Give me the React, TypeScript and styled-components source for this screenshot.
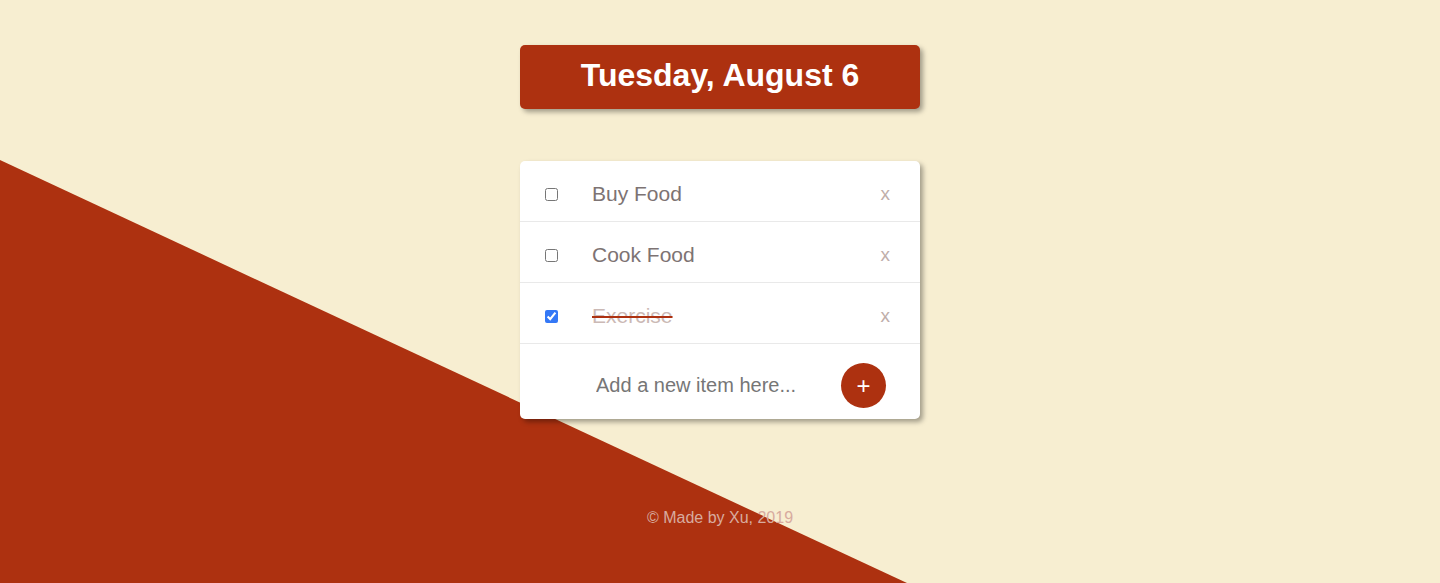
import styled, { createGlobalStyle } from "styled-components";

const GlobalStyle = createGlobalStyle`
  html, body {
    margin: 0;
    padding: 0;
    background-color: #f7eed1;
    font-family: "Liberation Sans", Helvetica, Arial, sans-serif;
  }
`;

const Page = styled.div`
  position: relative;
  min-height: 583px;
  overflow: hidden;
  display: flex;
  flex-direction: column;
  align-items: center;
  &::before {
    content: "";
    position: absolute;
    inset: 0;
    background-color: #ad3110;
    clip-path: polygon(0 160px, 907px 583px, 0 583px);
    z-index: 0;
  }
`;

const Heading = styled.div`
  position: relative;
  z-index: 1;
  width: 400px;
  height: 64px;
  margin-top: 45px;
  display: flex;
  align-items: center;
  justify-content: center;
  background-color: #ad3110;
  border-radius: 5px;
  box-shadow: 3px 3px 5px rgba(0, 0, 0, 0.35);
  h1 {
    margin: 0 0 4px;
    color: #fff;
    font-size: 32px;
    font-weight: 700;
  }
`;

const Card = styled.div`
  position: relative;
  z-index: 1;
  width: 400px;
  margin-top: 52px;
  background-color: #fff;
  border-radius: 5px;
  box-shadow: 3px 3px 5px rgba(0, 0, 0, 0.35);
`;

const Row = styled.div`
  box-sizing: border-box;
  display: flex;
  align-items: center;
  height: 61px;
  padding-top: 6px;
  border-bottom: 1px solid #e9e9e9;
`;

const Check = styled.input`
  flex-shrink: 0;
  width: 13px;
  height: 13px;
  margin: 0 34px 0 25px;
  accent-color: #3478f6;
`;

const Label = styled.p<{ $done?: boolean }>`
  flex: 1;
  margin: 0;
  font-size: 21px;
  color: ${(p) => (p.$done ? "#cbb9b5" : "#7d7373")};
  text-decoration: ${(p) => (p.$done ? "line-through" : "none")};
  text-decoration-color: #ad3110;
  text-decoration-thickness: 2px;
`;

const Remove = styled.button`
  border: none;
  background: none;
  padding: 0;
  margin-right: 30px;
  font-family: inherit;
  font-size: 19px;
  color: #bfaeaa;
  cursor: pointer;
`;

const AddForm = styled.form`
  box-sizing: border-box;
  display: flex;
  align-items: center;
  height: 75px;
  padding: 8px 34px 0 76px;
`;

const AddInput = styled.input`
  flex: 1;
  min-width: 0;
  border: none;
  outline: none;
  padding: 0;
  font-family: inherit;
  font-size: 20px;
  color: #555;
  &::placeholder {
    color: #767676;
  }
`;

const AddButton = styled.button`
  flex-shrink: 0;
  width: 45px;
  height: 45px;
  border: none;
  border-radius: 50%;
  background-color: #ad3110;
  color: #fff;
  font-family: inherit;
  font-size: 24px;
  line-height: 45px;
  padding: 0;
  cursor: pointer;
`;

const Footer = styled.footer`
  position: relative;
  z-index: 1;
  margin-top: 90px;
  font-size: 16px;
  color: #d8ab9f;
`;

const items = [
  { name: "Buy Food", done: false },
  { name: "Cook Food", done: false },
  { name: "Exercise", done: true },
];

export default function App() {
  return (
    <Page>
      <GlobalStyle />
      <Heading>
        <h1>Tuesday, August 6</h1>
      </Heading>
      <Card>
        {items.map((item) => (
          <Row key={item.name}>
            <Check type="checkbox" defaultChecked={item.done} />
            <Label $done={item.done}>{item.name}</Label>
            <Remove type="button">x</Remove>
          </Row>
        ))}
        <AddForm onSubmit={(e) => e.preventDefault()}>
          <AddInput type="text" placeholder="Add a new item here..." />
          <AddButton type="submit">+</AddButton>
        </AddForm>
      </Card>
      <Footer>© Made by Xu, 2019</Footer>
    </Page>
  );
}
